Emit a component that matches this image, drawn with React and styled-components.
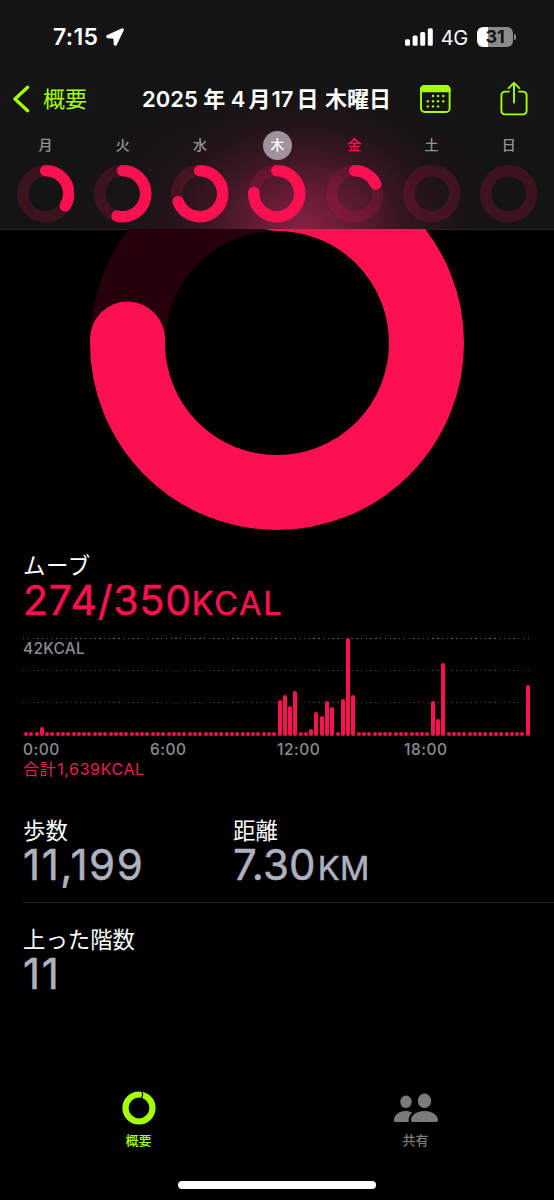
import React from "react";
import styled, { createGlobalStyle } from "styled-components";

const PINK = "#fb114f";
const GREEN = "#a6ff00";

const GlobalStyle = createGlobalStyle`
  * { box-sizing: border-box; }
  body {
    margin: 0;
    background: #000;
    color: #fff;
    font-family: Inter, "Noto Sans CJK JP", sans-serif;
  }
  svg { display: block; flex: none; }
`;

const Screen = styled.main`
  width: 554px;
  height: 1200px;
  display: flex;
  flex-direction: column;
  overflow: hidden;
  background: #000;
`;

const Header = styled.header`
  height: 229px;
  flex: none;
  background:
    radial-gradient(ellipse 160px 130px at 304px 228px, rgba(158, 36, 78, 0.8), rgba(140, 32, 70, 0.6) 30%, rgba(115, 26, 58, 0.3) 60%, rgba(100, 22, 50, 0.11) 80%, rgba(90, 20, 45, 0) 100%),
    radial-gradient(ellipse 230px 150px at 285px 229px, rgba(90, 20, 45, 0.3), rgba(90, 20, 45, 0)),
    #141414;
`;

const StatusBar = styled.div`
  height: 74px;
  display: flex;
  align-items: center;
  padding: 0 38px 0 53px;
`;

const Clock = styled.span`
  font-size: 23px;
  font-weight: 600;
  letter-spacing: 0.3px;
  margin-right: 7px;
  line-height: 28px;
`;

const Network = styled.span`
  font-size: 20px;
  line-height: 26px;
  letter-spacing: -0.3px;
  margin: 2px 9px 0 8px;
`;

const Spacer = styled.div`
  flex: 1;
`;

const Battery = styled.div`
  width: 36px;
  height: 20px;
  border-radius: 6px;
  display: flex;
  align-items: center;
  justify-content: center;
  background: linear-gradient(90deg, #fff 31%, #8b8b8b 31%);
  color: #141414;
  font-size: 18px;
  font-weight: 700;
  line-height: 20px;
  letter-spacing: -0.3px;
`;

const BatteryTip = styled.div`
  width: 2px;
  height: 6px;
  margin: 0 0 0 1px;
  border-radius: 0 2px 2px 0;
  background: #8b8b8b;
`;

const NavBar = styled.nav`
  height: 50px;
  display: flex;
  align-items: center;
  padding: 0 26px 0 12px;
`;

const BackLabel = styled.span`
  color: ${GREEN};
  font-size: 22px;
  line-height: 30px;
  margin: -1px 0 0 12px;
  width: 99px;
`;

const Title = styled.h1`
  margin: -1px 0 0;
  font-size: 22px;
  font-weight: 600;
  line-height: 30px;
  white-space: nowrap;
  width: 278px;
`;

const Spaced = styled.span`
  margin: 0 ${(p) => p.$after}px 0 ${(p) => p.$before}px;
`;

const Week = styled.div`
  display: grid;
  grid-template-columns: repeat(7, 77.2px);
  padding: 7px 0 0 7px;
`;

const Day = styled.div`
  display: flex;
  flex-direction: column;
  align-items: center;
  gap: 5px;
`;

const DayName = styled.span`
  width: 29px;
  height: 29px;
  border-radius: 50%;
  text-align: center;
  font-size: 14px;
  line-height: 27px;
  font-weight: 500;
  background: ${(p) => (p.$selected ? "#a0919a" : "transparent")};
  color: ${(p) => (p.$selected ? "#fff" : p.$today ? PINK : "#949496")};
`;

const RingArea = styled.section`
  height: 320px;
  flex: none;
  display: flex;
  justify-content: center;
  overflow: hidden;
  background: linear-gradient(#242223 1px, #000 1px);
  svg { margin-top: -73px; }
`;

const Metric = styled.section`
  display: flex;
  flex-direction: column;
  padding: 0 23px;
`;

const Label = styled.h2`
  margin: 0;
  height: 32px;
  font-size: 22.4px;
  font-weight: 400;
  line-height: 34px;
  letter-spacing: ${(p) => p.$track || 0}px;
`;

const Value = styled.div`
  height: 38px;
  line-height: 38px;
  font-size: ${(p) => p.$size || 42}px;
  font-weight: 400;
  -webkit-text-stroke: 0.5px currentColor;
  letter-spacing: ${(p) => p.$track || 0}px;
  color: ${(p) => p.$color || "#aeb2bf"};
  white-space: nowrap;
`;

const Unit = styled.span`
  font-size: 32.5px;
  letter-spacing: ${(p) => p.$track || 0}px;
  margin-left: ${(p) => p.$gap || 0}px;
`;

const Chart = styled.div`
  height: 99px;
  margin-top: 18px;
  display: grid;
  > * { grid-area: 1 / 1; }
`;

const GridLines = styled.div`
  display: flex;
  flex-direction: column;
  gap: 31px;
  padding-top: 1px;
`;

const GridLine = styled.div`
  height: 1px;
  background: repeating-linear-gradient(90deg, ${(p) => (p.$top ? "#606060" : "#3d3d3d")} 0 1.4px, transparent 1.4px 4.76px);
`;

const ChartMax = styled.span`
  font-size: 15.5px;
  font-weight: 500;
  line-height: 20px;
  letter-spacing: 0.25px;
  color: #8c8c90;
  margin-top: 2px;
`;

const Bars = styled.div`
  display: flex;
  align-items: flex-end;
  justify-content: space-between;
  padding: 0 1px;
`;

const Bar = styled.i`
  width: 4px;
  border-radius: 2px;
  background: ${PINK};
`;

const Axis = styled.div`
  display: grid;
  grid-template-columns: repeat(4, 127px);
  margin-top: 4px;
  font-size: 15.5px;
  font-weight: 500;
  line-height: 19px;
  letter-spacing: 0.5px;
  color: #8c8c90;
`;

const Total = styled.div`
  font-size: 16px;
  line-height: 20px;
  letter-spacing: 0.6px;
  color: #e62054;
`;

const StatRow = styled.section`
  display: grid;
  grid-template-columns: 210px 1fr;
  margin-left: 23px;
  padding-top: ${(p) => p.$top}px;
  height: ${(p) => p.$height}px;
  flex: none;
  border-bottom: ${(p) => (p.$divided ? "1px solid #1f1f21" : "0")};
`;

const TabBar = styled.nav`
  height: 90px;
  flex: none;
  display: grid;
  grid-template-columns: 1fr 1fr;
  margin-top: auto;
`;

const Tab = styled.div`
  display: flex;
  flex-direction: column;
  align-items: center;
  gap: 6px;
  color: ${(p) => (p.$active ? GREEN : "#7b7b7b")};
  font-size: 13px;
  font-weight: 500;
  line-height: 18px;
`;

const HomeIndicator = styled.div`
  width: 198px;
  height: 8px;
  flex: none;
  margin: 0 auto 11px;
  border-radius: 4px;
  background: #fff;
`;

function Ring({ size, width, progress, track }) {
  const r = (size - width) / 2;
  const c = size / 2;
  const length = 2 * Math.PI * r;
  return (
    <svg width={size} height={size} viewBox={`0 0 ${size} ${size}`} fill="none" strokeWidth={width}>
      <circle cx={c} cy={c} r={r} stroke={track} />
      {progress > 0 && (
        <circle
          cx={c}
          cy={c}
          r={r}
          stroke={PINK}
          strokeLinecap="round"
          strokeDasharray={`${length * progress} ${length}`}
          transform={`rotate(-90 ${c} ${c})`}
        />
      )}
    </svg>
  );
}

const days = [
  { name: "月", progress: 0.336 },
  { name: "火", progress: 0.537 },
  { name: "水", progress: 0.689 },
  { name: "木", progress: 0.754, selected: true },
  { name: "金", progress: 0.179, today: true },
  { name: "土", progress: 0 },
  { name: "日", progress: 0 },
];

const activity = {
  3: 9, 48: 36.5, 49: 41.5, 50: 30, 51: 45, 54: 7.3, 55: 24.3, 56: 20, 57: 35,
  58: 29, 60: 37.5, 61: 98, 62: 41, 77: 35, 78: 17.5, 79: 73, 95: 51.5,
};

const LocationIcon = () => (
  <svg width="20" height="20" viewBox="0 0 20 20">
    <path d="M17.400 2.200 2.200 9.200 2.600 10.400 9.300 10.700 9.700 17.600 10.700 17.800 18 2.700Z" fill="#fff" stroke="#fff" strokeWidth="1.900" strokeLinejoin="round" />
  </svg>
);

const SignalIcon = () => (
  <svg width="28" height="18" viewBox="0 0 28 18" fill="#fff">
    <rect x="0" y="11.3" width="5" height="6.4" rx="1.5" />
    <rect x="7.6" y="7.6" width="5" height="10.1" rx="1.5" />
    <rect x="15.2" y="3.9" width="5" height="13.8" rx="1.5" />
    <rect x="22.8" y=".3" width="5" height="17.4" rx="1.5" />
  </svg>
);

const BackIcon = () => (
  <svg width="19" height="28" viewBox="0 0 19 28">
    <path d="M15.6 2.3 3 14l12.6 11.7" fill="none" stroke={GREEN} strokeWidth="3.3" strokeLinecap="round" strokeLinejoin="round" />
  </svg>
);

const calendarDots = [[13, 11], [18.1, 11], [23.3, 11], [7.8, 16.2], [13, 16.2], [18.1, 16.2], [23.3, 16.2], [7.8, 21.4], [13, 21.4], [18.1, 21.4]];

const CalendarIcon = () => (
  <svg width="31" height="28" viewBox="0 0 31 28">
    <rect x="1" y="1" width="28.6" height="26" rx="3.6" fill="none" stroke={GREEN} strokeWidth="1.9" />
    <path d="M.1 7.3V4.4A4.2 4.2 0 0 1 4.3.1h22a4.2 4.2 0 0 1 4.2 4.3v2.9Z" fill={GREEN} />
    {calendarDots.map(([x, y]) => (
      <circle key={`${x}-${y}`} cx={x} cy={y} r="1.2" fill={GREEN} />
    ))}
  </svg>
);

const ShareIcon = () => (
  <svg width="28" height="35" viewBox="0 0 28 35" fill="none" stroke={GREEN} strokeWidth="1.9" strokeLinecap="round" strokeLinejoin="round">
    <path d="M9 9.600H4.800A3.400 3.400 0 0 0 1.400 13v16a3.400 3.400 0 0 0 3.400 3.400h18.400a3.400 3.400 0 0 0 3.400-3.400V13a3.400 3.400 0 0 0-3.400-3.400H19" />
    <path d="M14 20.500V1M8.700 6.200 14 .9l5.300 5.300" />
  </svg>
);

const SummaryIcon = () => (
  <svg width="34" height="34" viewBox="0 0 34 34">
    <circle cx="17" cy="17" r="13.5" fill="none" stroke={GREEN} strokeWidth="6.2" />
    <path d="M19 .2c2.300 2 2.300 4.700 0 6.900" fill="none" stroke="#000" strokeWidth="1.1" />
  </svg>
);

const SharingIcon = () => (
  <svg width="46" height="34" viewBox="0 0 46 34" fill="#7b7b7b">
    <ellipse cx="13" cy="10.8" rx="5.7" ry="6.2" />
    <path d="M1 29.2C1 24.2 6 20 12.7 20c2.5 0 4.7.6 6.6 1.6-2.7 2.2-4 5-3.6 9.4H2.6C1.500 31 1 30.300 1 29.200Z" />
    <ellipse cx="31.5" cy="9.8" rx="6.7" ry="7.3" />
    <path d="M18 29.300C18 24.400 23.400 20 31.500 20S45 24.400 45 29.300c0 1.100-.6 1.700-1.700 1.700H19.700c-1.100 0-1.700-.6-1.700-1.700Z" />
  </svg>
);

export default function App() {
  return (
    <Screen>
      <GlobalStyle />
      <Header>
        <StatusBar>
          <Clock>7:15</Clock>
          <LocationIcon />
          <Spacer />
          <SignalIcon />
          <Network>4G</Network>
          <Battery>31</Battery>
          <BatteryTip />
        </StatusBar>
        <NavBar>
          <BackIcon />
          <BackLabel>概要</BackLabel>
          <Title>
            2025<Spaced $before={5.5} $after={5.5}>年</Spaced>4<Spaced $before={3} $after={1}>月</Spaced>17<Spaced $before={3} $after={1}>日</Spaced> 木曜日
          </Title>
          <CalendarIcon />
          <Spacer />
          <ShareIcon />
        </NavBar>
        <Week>
          {days.map((d) => (
            <Day key={d.name}>
              <DayName $selected={d.selected} $today={d.today}>{d.name}</DayName>
              <Ring size={57.5} width={11.5} progress={d.progress} track="rgba(251, 17, 79, 0.17)" />
            </Day>
          ))}
        </Week>
      </Header>

      <RingArea>
        <Ring size={374} width={75} progress={0.754} track="#26010c" />
      </RingArea>

      <Metric>
        <Label $track={0.6}>ムーブ</Label>
        <Value $color={PINK} $size={41} $track={0.8}>
          274/350<Unit $track={1.7}>KCAL</Unit>
        </Value>
        <Chart>
          <GridLines>
            <GridLine $top />
            <GridLine />
            <GridLine />
          </GridLines>
          <ChartMax>42KCAL</ChartMax>
          <Bars>
            {Array.from({ length: 96 }, (_, i) => (
              <Bar key={i} style={{ height: activity[i] || 4 }} />
            ))}
          </Bars>
        </Chart>
        <Axis>
          <span>0:00</span>
          <span>6:00</span>
          <span>12:00</span>
          <span>18:00</span>
        </Axis>
        <Total>
          合計<Spaced $before={1} $after={0}>1,639KCAL</Spaced>
        </Total>
      </Metric>

      <StatRow $top={35} $height={124} $divided>
        <div>
          <Label>歩数</Label>
          <Value $track={1.6}>11,199</Value>
        </div>
        <div>
          <Label>距離</Label>
          <Value $track={0.2}>
            7.30<Unit $gap={2} $track={0.5}>KM</Unit>
          </Value>
        </div>
      </StatRow>
      <StatRow $top={20} $height={100}>
        <div>
          <Label>上った階数</Label>
          <Value $track={1.6}>11</Value>
        </div>
      </StatRow>

      <TabBar>
        <Tab $active>
          <SummaryIcon />
          概要
        </Tab>
        <Tab>
          <SharingIcon />
          共有
        </Tab>
      </TabBar>
      <HomeIndicator />
    </Screen>
  );
}
